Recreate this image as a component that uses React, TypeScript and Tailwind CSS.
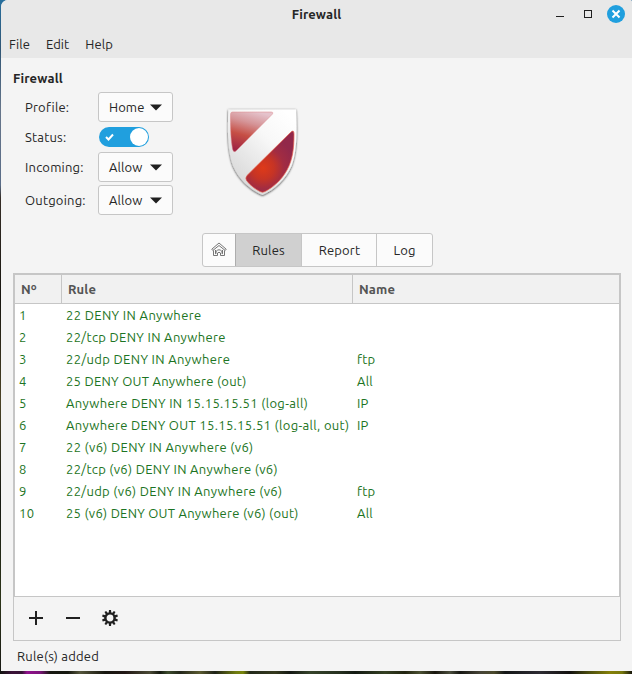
import React from 'react';

const rules: [string, string, string, string][] = [
  ['1', '22 DENY IN Anywhere', '', 'tracking-[0.37px]'],
  ['2', '22/tcp DENY IN Anywhere', '', 'tracking-[0.34px]'],
  ['3', '22/udp DENY IN Anywhere', 'ftp', 'tracking-[0.36px]'],
  ['4', '25 DENY OUT Anywhere (out)', 'All', 'tracking-[0.28px]'],
  ['5', 'Anywhere DENY IN 15.15.15.51 (log-all)', 'IP', 'tracking-[0.35px]'],
  ['6', 'Anywhere DENY OUT 15.15.15.51 (log-all, out)', 'IP', 'tracking-[0.33px]'],
  ['7', '22 (v6) DENY IN Anywhere (v6)', '', 'tracking-[0.32px]'],
  ['8', '22/tcp (v6) DENY IN Anywhere (v6)', '', 'tracking-[0.31px]'],
  ['9', '22/udp (v6) DENY IN Anywhere (v6)', 'ftp', 'tracking-[0.33px]'],
  ['10', '25 (v6) DENY OUT Anywhere (v6) (out)', 'All', 'tracking-[0.27px]'],
];

function Select({ value }: { value: string }) {
  return (
    <button className="flex h-[30px] w-[75px] items-center justify-between rounded-[3px] border border-[#c6c6c6] bg-[#fbfbfb] pr-[10px] pl-[10px]">
      <span className="tracking-[0.1px]">{value}</span>
      <svg width="12" height="7" viewBox="0 0 12 7">
        <path d="M0 0.5h12L6 6.5z" fill="#202020" />
      </svg>
    </button>
  );
}

function Shield() {
  return (
    <svg width="76" height="93" viewBox="0 0 76 93" className="ml-[51px] mt-[14px]">
      <defs>
        <linearGradient id="silver" gradientUnits="userSpaceOnUse" x1="66" y1="10" x2="12" y2="66">
          <stop offset="0" stopColor="#fff" />
          <stop offset="0.4" stopColor="#f8f8f8" />
          <stop offset="1" stopColor="#dcdcdc" />
        </linearGradient>
        <radialGradient id="ember" gradientUnits="userSpaceOnUse" cx="39" cy="62" r="32">
          <stop offset="0" stopColor="#de3a19" />
          <stop offset="0.35" stopColor="#c63425" />
          <stop offset="0.65" stopColor="#a22c42" />
          <stop offset="1" stopColor="#92284a" />
        </radialGradient>
        <linearGradient id="gloss" gradientUnits="userSpaceOnUse" x1="26" y1="4" x2="15" y2="44">
          <stop offset="0" stopColor="#e5c3cc" />
          <stop offset="0.3" stopColor="#d59497" />
          <stop offset="0.62" stopColor="#c64f45" />
          <stop offset="1" stopColor="#a02544" />
        </linearGradient>
        <filter id="shade" x="-10%" y="-10%" width="120%" height="120%">
          <feDropShadow dx="0" dy="0.7" stdDeviation="1.2" floodColor="#000" floodOpacity="0.8" />
        </filter>
      </defs>
      <path d="M4.300 3.500H72C73 25 73 45 67.500 60C62 73 50.500 84 38.500 89C26 84 14.500 73 9 60C3.500 45 3.500 25 4.300 3.500Z" fill="url(#silver)" filter="url(#shade)" />
      <path d="M8.500 6H47Q50 6 48 8.500L12.500 44.500Q9.500 47.500 8.500 43C6.500 32 6.300 19 6.600 8Q6.700 6 8.500 6Z" fill="url(#gloss)" stroke="#dc8588" strokeWidth="0.5" />
      <path d="M66.500 26.500Q70 23 70 28C70 43 68.500 54 63 64C57.500 74 49.500 81 41 85.500Q38.500 87 36 85.500C31 83 26 79 22.500 74.500Q21 72 23 69.500Z" fill="url(#ember)" stroke="#e8604c" strokeWidth="0.7" />
    </svg>
  );
}

const gearTeeth = [0, 36, 72, 108, 144, 180, 216, 252, 288, 324];
const label = 'pl-3 tracking-[0.2px]';

export default function App() {
  return (
    <div className="h-[674px] w-[632px] overflow-hidden bg-[linear-gradient(to_bottom,#286f9d_0px,#315675_50px,#66758a_110px,#596c87_185px,#352d26_198px,#17150f_300px,#4b4326_400px,#171a13_500px,#2d3419_600px,#171713_674px)] pl-px font-['Ubuntu','Noto_Sans',sans-serif] text-[13px] leading-[18px] text-[#262626]">
      <div className="flex h-[671px] flex-col rounded-tl-[7px] rounded-tr-[2px] bg-[#f4f4f4]">
        <header className="flex h-[58px] flex-none flex-col rounded-tl-[7px] rounded-tr-[2px] bg-[#e8e8e8]">
          <div className="grid h-[28px] grid-cols-[1fr_auto_1fr] items-center">
            <span />
            <span className="text-[13px] font-semibold tracking-[0.1px]">Firewall</span>
            <div className="flex items-center justify-end pr-[7px]">
              <svg width="71" height="18" viewBox="0 0 71 18">
                <path d="M2 11.5h8" stroke="#202020" />
                <rect x="30.500" y="5.500" width="7" height="7" fill="none" stroke="#202020" />
                <circle cx="62" cy="9" r="9" fill="#209fde" />
                <path d="M59.200 6.200l5.600 5.600M64.800 6.200l-5.600 5.600" stroke="white" strokeWidth="2" strokeLinecap="square" />
              </svg>
            </div>
          </div>
          <nav className="flex h-[30px] items-center gap-[16px] pt-px pl-2 tracking-[0.08px]">
            <span>File</span><span>Edit</span><span>Help</span>
          </nav>
        </header>

        <section className="flex h-[157px] flex-none flex-col pt-[11px] pl-3">
          <b className="text-[13px] font-bold tracking-[0.15px]">Firewall</b>
          <div className="mt-[5px] flex items-start">
            <div className="grid grid-cols-[85px_75px] grid-rows-[30px_24px_30px_30px] items-center gap-y-[3px]">
              <span className={label}>Profile:</span><Select value="Home" />
              <span className={label}>Status:</span>
              <div className="ml-px flex h-5 w-[50px] items-center justify-between rounded-full bg-[#209fde] pr-px pl-[6px]">
                <svg width="9" height="8" viewBox="0 0 9 8"><path d="M1 4l2.500 2.500L8 1.500" fill="none" stroke="white" strokeWidth="2" /></svg>
                <span className="size-[18px] rounded-full bg-white" />
              </div>
              <span className={label}>Incoming:</span><Select value="Allow" />
              <span className={label}>Outgoing:</span><Select value="Allow" />
            </div>
            <Shield />
          </div>
        </section>

        <div className="mt-[18px] ml-[201px] flex h-[34px] w-[231px] flex-none overflow-hidden rounded-[3px] border border-[#c6c6c6] bg-[#fbfbfb]">
          <div className="flex w-8 items-center justify-center">
            <svg width="16" height="16" viewBox="0 0 16 16" fill="none" stroke="#666" strokeWidth="0.9" strokeLinejoin="round">
              <path d="M0.800 7.200L8 1L15.200 7.200L14.200 8.500L8 3.500L1.800 8.500Z" />
              <path d="M2.500 8.500V13.500H6.500V11Q8 9.500 9.500 11V13.500H13.500V8.500M4.500 8V11.700H5V9.500Q8 6 11 9.500V11.700H11.500V8" />
            </svg>
          </div>
          <div className="-my-px flex w-[67px] items-center justify-center border border-[#adadad] border-r-[#c6c6c6] bg-[#d0d0d0] tracking-[0.15px]">Rules</div>
          <div className="flex w-[75px] items-center justify-center border-r border-[#c6c6c6] pl-px tracking-[0.15px]">Report</div>
          <div className="flex flex-1 items-center justify-center tracking-[0.15px]">Log</div>
        </div>

        <main className="mt-[6px] mr-[11px] ml-3 flex h-[368px] flex-none flex-col border border-[#c6c6c6]">
          <div className="flex h-[323px] flex-col border border-[#c6c6c6] bg-white">
            <div className="grid h-[29px] flex-none grid-cols-[47px_291px_1fr] border-b border-[#c6c6c6] bg-[#f1f1f1] text-[13px] leading-[28px] font-semibold tracking-[0.15px] text-[#555]">
              <span className="border-r border-[#c6c6c6] pl-[6px]">Nº</span>
              <span className="border-r border-[#c6c6c6] pl-[6px]">Rule</span>
              <span className="pl-[6px]">Name</span>
            </div>
            {rules.map(([n, rule, name, tracking]) => (
              <div key={n} className="grid h-[22px] flex-none grid-cols-[47px_291px_1fr] items-center whitespace-nowrap text-[#1c7423]">
                <span className="pl-[4px] tracking-[0.3px]">{n}</span>
                <span className={`pl-[4px] ${tracking}`}>{rule}</span>
                <span className="pl-[4px] tracking-[0.2px]">{name}</span>
              </div>
            ))}
          </div>
          <div className="flex h-[43px] items-center pb-px pl-[15px]">
            <svg width="92" height="18" viewBox="0 0 92 18">
              <path d="M0 9h14M7 2v14M37 9h14" stroke="#202020" strokeWidth="2" />
              <circle cx="81" cy="9" r="4.600" fill="none" stroke="#202020" strokeWidth="2.400" />
              {gearTeeth.map((angle) => (
                <path key={angle} d="M80 1h2L82.300 4h-2.600z" fill="#202020" transform={`rotate(${angle} 81 9)`} />
              ))}
            </svg>
          </div>
        </main>
        <footer className="flex h-[30px] items-center pl-4 tracking-[0.2px]">Rule(s) added</footer>
      </div>
      <div className="-ml-px h-[3px] bg-[linear-gradient(90deg,#10140e_0px,#3b1238_12px,#351434_22px,#90108c_27px,#7c147a_40px,#171810_50px,#15170f_68px,#55563c_80px,#17160f_105px,#211714_125px,#4a4a35_150px,#14180f_160px,#3c4b2c_168px,#23261a_180px,#5a5a30_200px,#1e2118_215px,#6f7c10_236px,#788509_243px,#22281a_250px,#35391d_275px,#141813_290px,#35432a_310px,#252f1e_340px,#131912_355px,#344023_385px,#21230f_405px,#4b5032_420px,#17150d_435px,#4a4d3c_450px,#161612_460px,#454336_480px,#4b4a2c_494px,#141617_505px,#2d2b32_540px,#12100e_570px,#4e500e_590px,#858008_610px,#77780c_622px,#16150c_632px)]" />
    </div>
  );
}
